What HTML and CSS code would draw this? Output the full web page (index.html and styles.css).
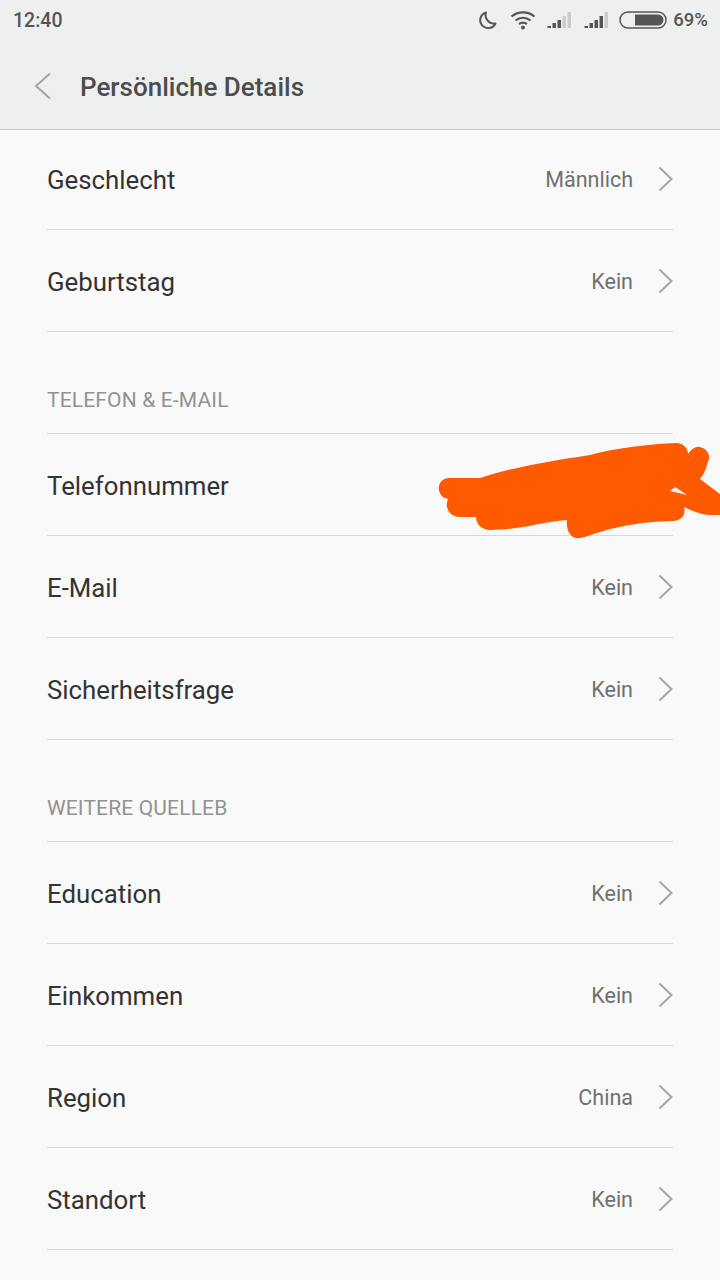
FILE: index.html
```html
<!DOCTYPE html>
<html>
<head>
  <title>Persönliche Details</title>
  <link rel="stylesheet" href="styles.css">
</head>
<body>
  <div class="screen">
    <div class="top">
      <div class="status">
        <span class="time">12:40</span>
        <div class="status-icons">
          <svg class="moon" width="20" height="20" viewBox="0 0 20 20"><path d="M8 2.5 A8 8 0 1 0 17.5 13.5 A8.5 8.5 0 0 1 8 2.5 Z" fill="none" stroke="#555" stroke-width="2" stroke-linejoin="round"/></svg>
          <svg class="wifi" width="26" height="20" viewBox="0 0 26 20"><g fill="none" stroke="#555" stroke-width="2.2"><path d="M1.5 6.5 C8 1 18 1 24.5 6.5"/><path d="M5.5 10.5 C10 6.8 16 6.8 20.5 10.5"/><path d="M9 14 C11.500 12.300 14.500 12.300 17 14"/></g><circle cx="13" cy="17.500" r="2" fill="#555"/></svg>
          <svg class="signal" width="25" height="18" viewBox="0 0 25 18"><path d="M0.500 15 H4 V17 H0.500 Z M5.500 12 H9 V17 H5.500 Z M10.500 9 H14 V17 H10.500 Z" fill="#555"/><path d="M15.500 5 H19 V17 H15.500 Z M20.500 1 H24 V17 H20.500 Z" fill="#ccc"/></svg>
          <svg class="signal" width="25" height="18" viewBox="0 0 25 18"><path d="M0.500 15 H4 V17 H0.500 Z M5.500 12 H9 V17 H5.500 Z M10.500 9 H14 V17 H10.500 Z M15.500 5 H19 V17 H15.500 Z" fill="#555"/><path d="M20.500 1 H24 V17 H20.500 Z" fill="#ccc"/></svg>
          <svg class="battery" width="48" height="18" viewBox="0 0 48 18"><rect x="1" y="1" width="46" height="16" rx="8" fill="none" stroke="#555" stroke-width="1.500"/><path d="M16 3.500 H39 A5.500 5.500 0 0 1 39 14.500 H16 Z" fill="#555"/></svg>
          <span class="percent">69%</span>
        </div>
      </div>
      <div class="title-bar">
        <svg class="back" width="18" height="28" viewBox="0 0 18 28"><path d="M16 1.500 L2 14 L16 26.500" fill="none" stroke="#a3a5a5" stroke-width="2"/></svg>
        <h1>Persönliche Details</h1>
      </div>
    </div>

    <div class="list">
      <div class="row first"><span class="label">Geschlecht</span><span class="value">Männlich</span><svg class="chev" width="15" height="26" viewBox="0 0 15 26"><path d="M1.500 1.500 L13.500 13 L1.500 24.500"/></svg></div>
      <div class="row"><span class="label">Geburtstag</span><span class="value">Kein</span><svg class="chev" width="15" height="26" viewBox="0 0 15 26"><path d="M1.500 1.500 L13.500 13 L1.500 24.500"/></svg></div>
      <div class="section">TELEFON &amp; E-MAIL</div>
      <div class="row"><span class="label">Telefonnummer</span></div>
      <div class="row"><span class="label">E-Mail</span><span class="value">Kein</span><svg class="chev" width="15" height="26" viewBox="0 0 15 26"><path d="M1.500 1.500 L13.500 13 L1.500 24.500"/></svg></div>
      <div class="row"><span class="label">Sicherheitsfrage</span><span class="value">Kein</span><svg class="chev" width="15" height="26" viewBox="0 0 15 26"><path d="M1.500 1.500 L13.500 13 L1.500 24.500"/></svg></div>
      <div class="section">WEITERE QUELLEB</div>
      <div class="row"><span class="label">Education</span><span class="value">Kein</span><svg class="chev" width="15" height="26" viewBox="0 0 15 26"><path d="M1.500 1.500 L13.500 13 L1.500 24.500"/></svg></div>
      <div class="row"><span class="label">Einkommen</span><span class="value">Kein</span><svg class="chev" width="15" height="26" viewBox="0 0 15 26"><path d="M1.500 1.500 L13.500 13 L1.500 24.500"/></svg></div>
      <div class="row"><span class="label">Region</span><span class="value">China</span><svg class="chev" width="15" height="26" viewBox="0 0 15 26"><path d="M1.500 1.500 L13.500 13 L1.500 24.500"/></svg></div>
      <div class="row"><span class="label">Standort</span><span class="value">Kein</span><svg class="chev" width="15" height="26" viewBox="0 0 15 26"><path d="M1.500 1.500 L13.500 13 L1.500 24.500"/></svg></div>
    </div>

    <!-- orange scribble drawn over the phone number -->
    <svg class="scribble" width="290" height="110" viewBox="430 430 290 110">
      <path fill="#ff5a00" fill-rule="evenodd" d="M449 478 H480 C510 468 550 461 590 455 C615 448 650 444 676 443 C684 443 688 449 688 454 C692 448 697 446 700 447 C708 449 711 456 708 462 C706 468 705 473 700 479 L720 494 V515 H708 C700 514 690 510 684 507 C686 515 682 521 672 521 C640 522 620 526 600 532 C590 535 582 539 576 538 C570 537 566 530 567 520 C540 522 520 530 490 530 C482 530 476 524 476 517 L460 517 C450 517 444 508 448 499 C440 498 438 490 439 486 C440 481 444 478 449 478 Z M675 487 L687 495 L670 491 Z"/>
    </svg>
  </div>
</body>
</html>
```

FILE: styles.css
```css
html, body { margin: 0; padding: 0; }
body { font-family: Roboto, "Noto Sans", sans-serif; background: #f9f9f9; color: #333; }

.screen { width: 720px; height: 1280px; overflow: hidden; position: relative; background: #f9f9f9; }

.top { height: 129px; background: #eef0f0; border-bottom: 1px solid #c9c9c9; }
.status { height: 40px; display: flex; align-items: center; justify-content: space-between; padding: 0 12px 0 13px; color: #555; }
.time { font-size: 19.500px; font-weight: 500; }
.status-icons { display: flex; align-items: center; }
.moon { margin-right: 12px; }
.wifi { margin-right: 11px; }
.signal { margin-right: 12px; }
.signal + .signal { margin-right: 10px; }
.battery { margin-right: 6px; }
.percent { font-size: 18.500px; font-weight: 500; }

.title-bar { height: 89px; display: flex; align-items: center; padding-left: 34px; padding-top: 5px; box-sizing: border-box; }
.back { margin-right: 28px; margin-bottom: 2px; }
.title-bar h1 { margin: 0; font-size: 26px; font-weight: 500; color: #4c4c4c; }

.list { margin: 0 47px; }
.row { height: 99px; padding-top: 2px; border-bottom: 1px solid #d8d8d8; display: flex; align-items: center; }
.row.first { padding-top: 0; }
.label { font-size: 25.800px; color: #333; flex: 1; padding-top: 1px; }
.value { font-size: 21.500px; color: #707070; margin-right: 25px; }
.chev { fill: none; stroke: #a6a6a6; stroke-width: 2; margin-bottom: 2px; }

.section { height: 101px; border-bottom: 1px solid #d8d8d8; display: flex; align-items: flex-end; font-size: 21px; letter-spacing: 0.150px; color: #929292; line-height: 66px; }

.scribble { position: absolute; left: 430px; top: 430px; }
```
